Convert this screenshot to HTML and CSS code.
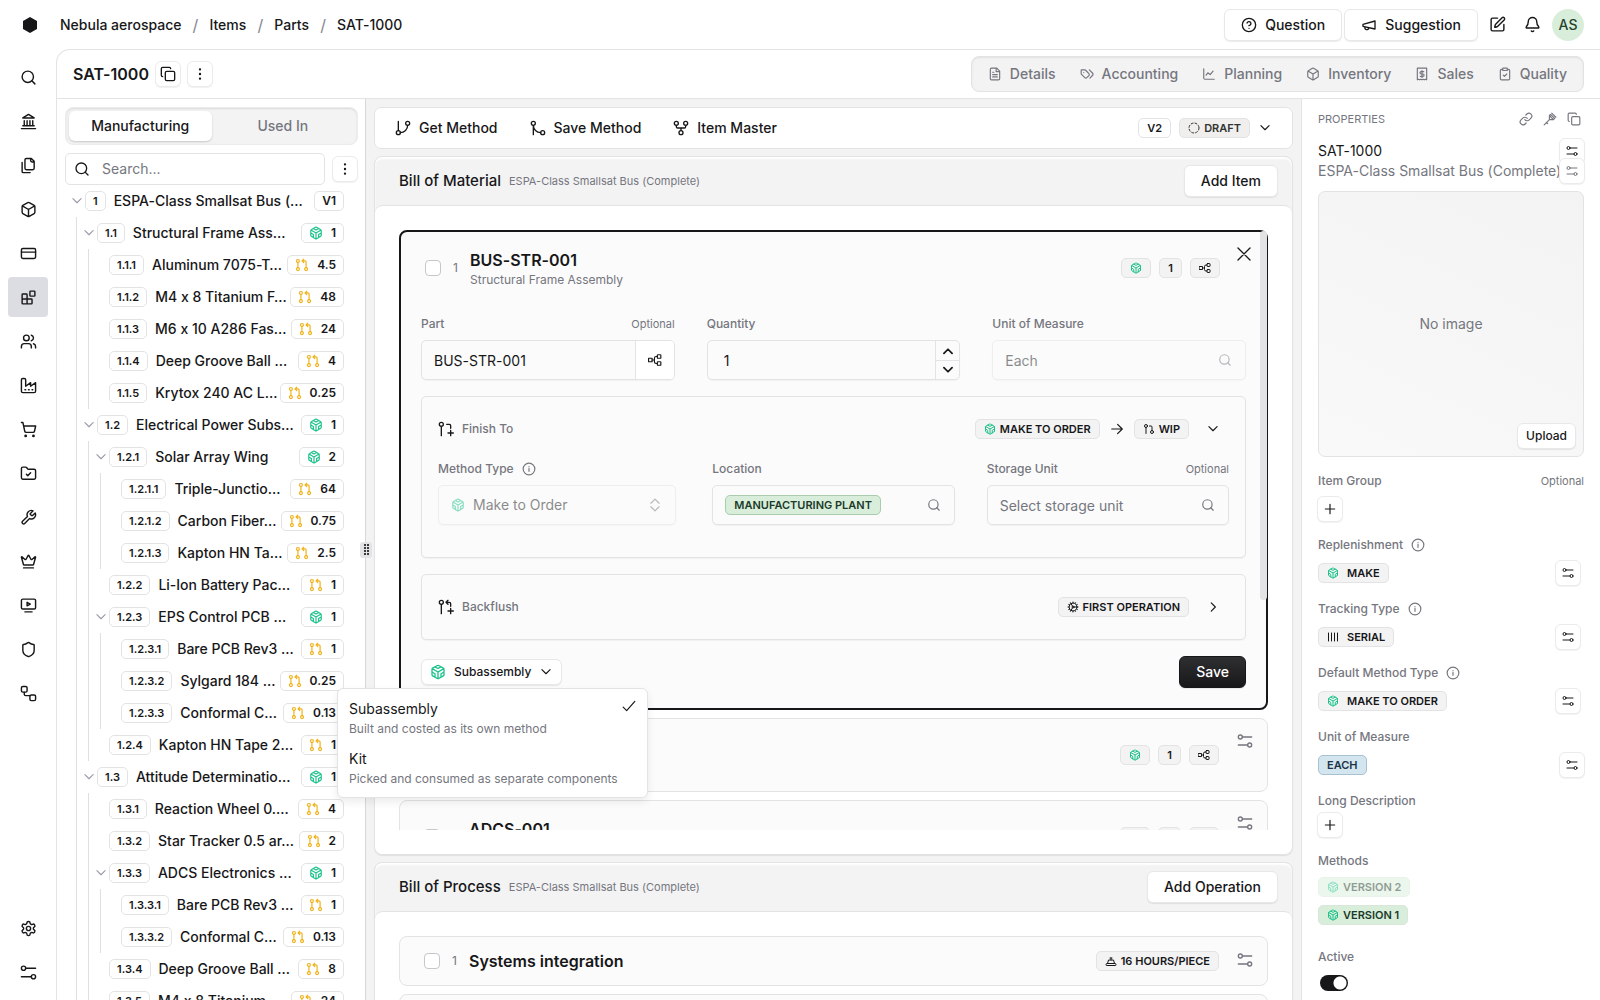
FILE: index.html
```html
<!DOCTYPE html>
<html lang="en">
<head>
    <meta charset="UTF-8">
    <meta name="viewport" content="width=device-width, initial-scale=1.0">
    <title>SAT-1000 | Parts</title>
    <link rel="stylesheet" href="styles.css">
</head>
<body>

    <!-- icon sprite -->
    <svg class="sprite" aria-hidden="true">
        <symbol id="search" viewBox="0 0 24 24"><circle cx="11" cy="11" r="8"/><path d="m21 21-4.3-4.3"/></symbol>
        <symbol id="bank" viewBox="0 0 24 24"><path d="M2 22h20M4 18h16M6 18v-7M10 18v-7M14 18v-7M18 18v-7M12 2l8 5H4z"/></symbol>
        <symbol id="files" viewBox="0 0 24 24"><path d="M20 7h-3a2 2 0 0 1-2-2V2M9 18a2 2 0 0 1-2-2V4a2 2 0 0 1 2-2h7l4 4v10a2 2 0 0 1-2 2ZM3 7.6v12.8A1.6 1.6 0 0 0 4.6 22h9.8"/></symbol>
        <symbol id="box" viewBox="0 0 24 24"><path d="M21 8a2 2 0 0 0-1-1.73l-7-4a2 2 0 0 0-2 0l-7 4A2 2 0 0 0 3 8v8a2 2 0 0 0 1 1.73l7 4a2 2 0 0 0 2 0l7-4A2 2 0 0 0 21 16ZM3.3 7l8.7 5 8.7-5M12 22V12"/></symbol>
        <symbol id="card" viewBox="0 0 24 24"><rect x="2" y="5" width="20" height="14" rx="2"/><path d="M2 10h20"/></symbol>
        <symbol id="blocks" viewBox="0 0 24 24"><rect x="14" y="3" width="7" height="7" rx="1"/><path d="M10 21V8a1 1 0 0 0-1-1H4a1 1 0 0 0-1 1v12a1 1 0 0 0 1 1h12a1 1 0 0 0 1-1v-5a1 1 0 0 0-1-1H3"/></symbol>
        <symbol id="users" viewBox="0 0 24 24"><path d="M16 21v-2a4 4 0 0 0-4-4H6a4 4 0 0 0-4 4v2"/><circle cx="9" cy="7" r="4"/><path d="M22 21v-2a4 4 0 0 0-3-3.87M16 3.13a4 4 0 0 1 0 7.75"/></symbol>
        <symbol id="factory" viewBox="0 0 24 24"><path d="M2 20a2 2 0 0 0 2 2h16a2 2 0 0 0 2-2V8l-7 5V8l-7 5V4a2 2 0 0 0-2-2H4a2 2 0 0 0-2 2ZM17 18h1M12 18h1M7 18h1"/></symbol>
        <symbol id="cart" viewBox="0 0 24 24"><circle cx="8" cy="21" r="1"/><circle cx="19" cy="21" r="1"/><path d="M2.05 2.05h2l2.66 12.42a2 2 0 0 0 2 1.58h9.78a2 2 0 0 0 1.95-1.57l1.65-7.43H5.12"/></symbol>
        <symbol id="folder" viewBox="0 0 24 24"><path d="M20 20a2 2 0 0 0 2-2V8a2 2 0 0 0-2-2h-7.9a2 2 0 0 1-1.69-.9L9.6 3.9A2 2 0 0 0 7.93 3H4a2 2 0 0 0-2 2v13a2 2 0 0 0 2 2ZM9 13l2 2 4-4"/></symbol>
        <symbol id="wrench" viewBox="0 0 24 24"><path d="M14.7 6.3a1 1 0 0 0 0 1.4l1.6 1.6a1 1 0 0 0 1.4 0l3.77-3.77a6 6 0 0 1-7.94 7.94l-6.91 6.91a2.12 2.12 0 0 1-3-3l6.91-6.91a6 6 0 0 1 7.94-7.94z"/></symbol>
        <symbol id="crown" viewBox="0 0 24 24"><path d="M11.56 3.27a.5.5 0 0 1 .88 0l2.95 5.6a1 1 0 0 0 1.52.3l4.27-3.67a.5.5 0 0 1 .8.52l-2.83 10.25a1 1 0 0 1-.96.73H5.81a1 1 0 0 1-.96-.73L2.02 6.02a.5.5 0 0 1 .8-.52l4.27 3.67a1 1 0 0 0 1.52-.3zM5 21h14"/></symbol>
        <symbol id="monitor" viewBox="0 0 24 24"><rect x="2" y="3" width="20" height="14" rx="2"/><path d="M10 7.5v5l4.5-2.5zM7 21h10"/></symbol>
        <symbol id="shield" viewBox="0 0 24 24"><path d="M20 13c0 5-3.5 7.5-7.66 8.95a1 1 0 0 1-.67-.01C7.5 20.5 4 18 4 13V6a1 1 0 0 1 1-1c2 0 4.5-1.2 6.24-2.72a1.17 1.17 0 0 1 1.52 0C14.51 3.81 17 5 19 5a1 1 0 0 1 1 1z"/></symbol>
        <symbol id="flow" viewBox="0 0 24 24"><rect x="2" y="2" width="8" height="8" rx="2"/><rect x="14" y="14" width="8" height="8" rx="2"/><path d="M6 10v3a2 2 0 0 0 2 2h6"/></symbol>
        <symbol id="gear" viewBox="0 0 24 24"><path d="M12.22 2h-.44a2 2 0 0 0-2 2v.18a2 2 0 0 1-1 1.73l-.43.25a2 2 0 0 1-2 0l-.15-.08a2 2 0 0 0-2.73.73l-.22.38a2 2 0 0 0 .73 2.73l.15.1a2 2 0 0 1 1 1.72v.51a2 2 0 0 1-1 1.74l-.15.09a2 2 0 0 0-.73 2.73l.22.38a2 2 0 0 0 2.73.73l.15-.08a2 2 0 0 1 2 0l.43.25a2 2 0 0 1 1 1.73V20a2 2 0 0 0 2 2h.44a2 2 0 0 0 2-2v-.18a2 2 0 0 1 1-1.73l.43-.25a2 2 0 0 1 2 0l.15.08a2 2 0 0 0 2.73-.73l.22-.39a2 2 0 0 0-.73-2.73l-.15-.08a2 2 0 0 1-1-1.74v-.5a2 2 0 0 1 1-1.74l.15-.09a2 2 0 0 0 .73-2.73l-.22-.38a2 2 0 0 0-2.73-.73l-.15.08a2 2 0 0 1-2 0l-.43-.25a2 2 0 0 1-1-1.73V4a2 2 0 0 0-2-2z"/><circle cx="12" cy="12" r="3"/></symbol>
        <symbol id="sliders" viewBox="0 0 24 24"><path d="M22 6H8M2 18h14"/><circle cx="5" cy="6" r="3"/><circle cx="19" cy="18" r="3"/></symbol>
        <symbol id="copy" viewBox="0 0 24 24"><rect x="8" y="8" width="14" height="14" rx="2"/><path d="M4 16a2 2 0 0 1-2-2V4a2 2 0 0 1 2-2h10a2 2 0 0 1 2 2"/></symbol>
        <symbol id="dots" viewBox="0 0 24 24"><path stroke-width="4" d="M12 4v.01M12 12v.01M12 20v.01"/></symbol>
        <symbol id="help" viewBox="0 0 24 24"><circle cx="12" cy="12" r="10"/><path d="M9.09 9a3 3 0 0 1 5.83 1c0 2-3 3-3 3M12 17h.01"/></symbol>
        <symbol id="mega" viewBox="0 0 24 24"><path d="m3 11 18-5v12L3 14zM11.6 16.8a3 3 0 1 1-5.8-1.6"/></symbol>
        <symbol id="edit" viewBox="0 0 24 24"><path d="M12 3H5a2 2 0 0 0-2 2v14a2 2 0 0 0 2 2h14a2 2 0 0 0 2-2v-7M18.4 2.6a1 1 0 0 1 3 3l-9 9a2 2 0 0 1-.85.5l-2.87.84a.5.5 0 0 1-.62-.62l.84-2.87a2 2 0 0 1 .5-.85z"/></symbol>
        <symbol id="bell" viewBox="0 0 24 24"><path d="M10.27 21a2 2 0 0 0 3.46 0M3.26 15.33A1 1 0 0 0 4 17h16a1 1 0 0 0 .74-1.67C19.41 13.96 18 12.5 18 8A6 6 0 0 0 6 8c0 4.5-1.41 5.96-2.74 7.33"/></symbol>
        <symbol id="doc" viewBox="0 0 24 24"><path d="M15 2H6a2 2 0 0 0-2 2v16a2 2 0 0 0 2 2h12a2 2 0 0 0 2-2V7zM14 2v6h6M8 9h2M8 13h8M8 17h8"/></symbol>
        <symbol id="tags" viewBox="0 0 24 24"><path d="m16 5 5.7 5.7a2.4 2.4 0 0 1 0 3.4L17 19M9.6 5.6A2 2 0 0 0 8.2 5H3a1 1 0 0 0-1 1v5.2a2 2 0 0 0 .6 1.4l5.7 5.7a2.4 2.4 0 0 0 3.4 0l3.6-3.6a2.4 2.4 0 0 0 0-3.4zM6.5 9.5h.01"/></symbol>
        <symbol id="chart" viewBox="0 0 24 24"><path d="M3 3v16a2 2 0 0 0 2 2h16M7 14l3-4 4 3 5-6"/></symbol>
        <symbol id="receipt" viewBox="0 0 24 24"><path d="M4 2h16v20l-2-1-2 1-2-1-2 1-2-1-2 1-2-1-2 1zM15 8h-4.500a2 2 0 1 0 0 4h3a2 2 0 1 1 0 4H9M12 6v12"/></symbol>
        <symbol id="clip" viewBox="0 0 24 24"><rect x="8" y="2" width="8" height="4" rx="1"/><path d="M16 4h2a2 2 0 0 1 2 2v14a2 2 0 0 1-2 2H6a2 2 0 0 1-2-2V6a2 2 0 0 1 2-2h2M9 14l2 2 4-4"/></symbol>
        <symbol id="cube" viewBox="0 0 24 24"><path d="M21 16V8a2 2 0 0 0-1-1.730l-7-4a2 2 0 0 0-2 0l-7 4A2 2 0 0 0 3 8v8a2 2 0 0 0 1 1.730l7 4a2 2 0 0 0 2 0l7-4A2 2 0 0 0 21 16zM7.500 4.210 12 6.810l4.500-2.600M7.500 19.790V14.600L3 12M21 12l-4.500 2.600v5.190M3.270 6.960 12 12l8.730-5.040M12 22V12"/></symbol>
        <symbol id="pull" viewBox="0 0 24 24"><circle cx="5" cy="5" r="2.500"/><circle cx="5" cy="19" r="2.500"/><circle cx="19" cy="19" r="2.500"/><path d="M5 8v8M12 5h5a2 2 0 0 1 2 2v9M15 8l-3-3 3-3"/></symbol>
        <symbol id="pr" viewBox="0 0 24 24"><circle cx="18" cy="18" r="3"/><circle cx="6" cy="6" r="3"/><path d="M13 6h3a2 2 0 0 1 2 2v7M6 9v12"/></symbol>
        <symbol id="pr-new" viewBox="0 0 24 24"><circle cx="5" cy="5" r="3"/><path d="M5 8v14M13 5h4a2 2 0 0 1 2 2v4M19 14v8M23 18h-8"/></symbol>
        <symbol id="pr-back" viewBox="0 0 24 24"><circle cx="5" cy="5" r="3"/><path d="M5 8v14M15 8l-3-3 3-3M12 5h5a2 2 0 0 1 2 2v4M19 14v8M23 18h-8"/></symbol>
        <symbol id="branch" viewBox="0 0 24 24"><circle cx="19" cy="5" r="3"/><circle cx="5" cy="19" r="3"/><path d="M5 2v14M19 8A11 11 0 0 1 8 19"/></symbol>
        <symbol id="merge" viewBox="0 0 24 24"><circle cx="19" cy="19" r="3"/><circle cx="5" cy="5" r="3"/><path d="M5 22V8a11 11 0 0 0 11 11"/></symbol>
        <symbol id="fork" viewBox="0 0 24 24"><circle cx="12" cy="19" r="3"/><circle cx="5" cy="5" r="3"/><circle cx="19" cy="5" r="3"/><path d="M19 8v2a2 2 0 0 1-2 2H7a2 2 0 0 1-2-2V8M12 12v4"/></symbol>
        <symbol id="nodes" viewBox="0 0 24 24"><rect x="1" y="9" width="6" height="6"/><rect x="16" y="3" width="6" height="6" rx="1"/><rect x="16" y="15" width="6" height="6" rx="1"/><path d="M7 12h4M16 6h-2a3 3 0 0 0-3 3v6a3 3 0 0 0 3 3h2"/></symbol>
        <symbol id="cog" viewBox="0 0 24 24"><circle cx="12" cy="12" r="8"/><circle cx="12" cy="12" r="2"/><path d="M12 2v2M12 22v-2M17 20.660l-1-1.730M11 10.270 7 3.340M20.660 17l-1.730-1M3.340 7l1.730 1M14 12h8M2 12h2M20.660 7l-1.730 1M3.340 17l1.730-1M17 3.340l-1 1.730M11 13.730l-4 6.930"/></symbol>
        <symbol id="dashed" viewBox="0 0 24 24"><circle cx="12" cy="12" r="10" stroke-dasharray="4 4"/></symbol>
        <symbol id="setup" viewBox="0 0 24 24"><path d="M3 21a1 1 0 0 1-1-1v-1a2 2 0 0 1 2-2h16a2 2 0 0 1 2 2v1a1 1 0 0 1-1 1ZM5 17l2-7h10l2 7M10 6h4M12 6v4"/></symbol>
        <symbol id="down" viewBox="0 0 24 24"><path d="m5 8 7 7 7-7"/></symbol>
        <symbol id="up" viewBox="0 0 24 24"><path d="m5 16 7-7 7 7"/></symbol>
        <symbol id="right" viewBox="0 0 24 24"><path d="m9 5 7 7-7 7"/></symbol>
        <symbol id="updown" viewBox="0 0 24 24"><path d="m5 9 7-7 7 7M5 15l7 7 7-7"/></symbol>
        <symbol id="arrow" viewBox="0 0 24 24"><path d="M3 12h18M13 4l8 8-8 8"/></symbol>
        <symbol id="close" viewBox="0 0 24 24"><path d="M3 3l18 18M21 3 3 21"/></symbol>
        <symbol id="info" viewBox="0 0 24 24"><circle cx="12" cy="12" r="10"/><path d="M12 16v-5M12 8h.01"/></symbol>
        <symbol id="check" viewBox="0 0 24 24"><path d="M22 4 8 20l-6-6"/></symbol>
        <symbol id="plus" viewBox="0 0 24 24"><path d="M4 12h16M12 4v16"/></symbol>
        <symbol id="link" viewBox="0 0 24 24"><path d="M10 13a5 5 0 0 0 7.540.540l3-3a5 5 0 0 0-7.070-7.070l-1.720 1.710M14 11a5 5 0 0 0-7.540-.540l-3 3a5 5 0 0 0 7.070 7.070l1.710-1.710"/></symbol>
        <symbol id="key" viewBox="0 0 24 24"><path d="m2 22 9-9M8 20l-2-2M13 4l7 7M11 6l7 7M15 2l7 7M13 4l-2 2v7h7l2-2"/></symbol>
        <symbol id="bars" viewBox="0 0 24 24"><path d="M3 4v16M9 4v16M15 4v16M21 4v16"/></symbol>
    </svg>

    <header class="topbar">
        <svg class="logo" viewBox="0 0 14 16"><path d="M7 0l7 4v8l-7 4-7-4V4z"/></svg>
        <nav class="crumbs">
            <a href="#">Nebula aerospace</a><span>/</span><a href="#">Items</a><span>/</span><a href="#">Parts</a><span>/</span><a href="#">SAT-1000</a>
        </nav>
        <div class="topbar-actions">
            <button class="btn"><svg class="i16"><use href="#help"/></svg>Question</button>
            <button class="btn"><svg class="i16"><use href="#mega"/></svg>Suggestion</button>
            <button class="ghost" aria-label="Edit"><svg class="i18"><use href="#edit"/></svg></button>
            <button class="ghost" aria-label="Notifications"><svg class="i18"><use href="#bell"/></svg></button>
            <button class="avatar">AS</button>
        </div>
    </header>

    <div class="shell">
        <nav class="rail" id="rail"></nav>

        <div class="panel">
            <div class="panel-header">
                <h1>SAT-1000</h1>
                <button class="btn-icon" aria-label="Copy"><svg class="i16"><use href="#copy"/></svg></button>
                <button class="btn-icon" aria-label="More"><svg class="i14"><use href="#dots"/></svg></button>
                <nav class="section-tabs">
                    <a href="#"><svg class="i14"><use href="#doc"/></svg>Details</a>
                    <a href="#"><svg class="i14"><use href="#tags"/></svg>Accounting</a>
                    <a href="#"><svg class="i14"><use href="#chart"/></svg>Planning</a>
                    <a href="#"><svg class="i14"><use href="#box"/></svg>Inventory</a>
                    <a href="#"><svg class="i14"><use href="#receipt"/></svg>Sales</a>
                    <a href="#"><svg class="i14"><use href="#clip"/></svg>Quality</a>
                </nav>
            </div>

            <div class="columns">
                <!-- explorer -->
                <aside class="explorer">
                    <div class="switch-tabs">
                        <button class="active">Manufacturing</button>
                        <button>Used In</button>
                    </div>
                    <div class="search-row">
                        <label class="search-box">
                            <svg class="i16"><use href="#search"/></svg>
                            <input type="text" placeholder="Search..." aria-label="Search">
                        </label>
                        <button class="btn-icon" aria-label="More"><svg class="i14"><use href="#dots"/></svg></button>
                    </div>
                    <ul class="tree" id="method-tree"></ul>
                    <div class="grip"><i></i><i></i><i></i><i></i><i></i><i></i><i></i><i></i></div>
                </aside>

                <!-- method editor -->
                <main class="content">
                    <div class="toolbar">
                        <button class="tool"><svg class="i16"><use href="#branch"/></svg>Get Method</button>
                        <button class="tool"><svg class="i16"><use href="#merge"/></svg>Save Method</button>
                        <button class="tool"><svg class="i16"><use href="#fork"/></svg>Item Master</button>
                        <div class="toolbar-end">
                            <span class="badge outline">V2</span>
                            <span class="badge draft"><svg class="i12"><use href="#dashed"/></svg>DRAFT</span>
                            <button class="ghost" aria-label="Versions"><svg class="i14"><use href="#down"/></svg></button>
                        </div>
                    </div>

                    <section class="card">
                        <div class="card-header">
                            <h2>Bill of Material</h2>
                            <small>ESPA-Class Smallsat Bus (Complete)</small>
                            <button class="btn">Add Item</button>
                        </div>
                        <div class="card-body">
                            <div class="list">
                                <article class="item open">
                                    <div class="item-header">
                                        <input type="checkbox" aria-label="Select BUS-STR-001">
                                        <span class="num">1</span>
                                        <div class="item-title">
                                            <h3>BUS-STR-001</h3>
                                            <p>Structural Frame Assembly</p>
                                        </div>
                                        <div class="badges">
                                            <span class="badge"><svg class="i12 green"><use href="#cube"/></svg></span>
                                            <span class="badge">1</span>
                                            <span class="badge"><svg class="i12"><use href="#nodes"/></svg></span>
                                        </div>
                                        <button class="corner" aria-label="Close"><svg class="i16"><use href="#close"/></svg></button>
                                    </div>

                                    <div class="fields">
                                        <div class="field">
                                            <div class="label-row"><label for="part">Part</label><small>Optional</small></div>
                                            <div class="control">
                                                <input type="text" id="part" value="BUS-STR-001">
                                                <button class="addon" aria-label="Open part"><svg class="i14"><use href="#nodes"/></svg></button>
                                            </div>
                                        </div>
                                        <div class="field">
                                            <div class="label-row"><label for="qty">Quantity</label></div>
                                            <div class="control">
                                                <input class="qty" type="text" id="qty" value="1">
                                                <div class="stepper">
                                                    <button aria-label="Increase"><svg class="i14"><use href="#up"/></svg></button>
                                                    <button aria-label="Decrease"><svg class="i14"><use href="#down"/></svg></button>
                                                </div>
                                            </div>
                                        </div>
                                        <div class="field">
                                            <div class="label-row"><label for="uom">Unit of Measure</label></div>
                                            <div class="control disabled">
                                                <input type="text" id="uom" value="Each" disabled>
                                                <svg class="i14 trail"><use href="#search"/></svg>
                                            </div>
                                        </div>
                                    </div>

                                    <div class="box">
                                        <div class="box-header">
                                            <svg class="i16"><use href="#pr-new"/></svg>
                                            <span>Finish To</span>
                                            <div class="badges">
                                                <span class="badge"><svg class="i12 green"><use href="#cube"/></svg>MAKE TO ORDER</span>
                                                <svg class="i14"><use href="#arrow"/></svg>
                                                <span class="badge"><svg class="i12"><use href="#pr"/></svg>WIP</span>
                                            </div>
                                            <button class="ghost" aria-label="Collapse"><svg class="i14"><use href="#down"/></svg></button>
                                        </div>
                                        <div class="fields">
                                            <div class="field narrow">
                                                <div class="label-row"><label for="method">Method Type</label><svg class="i14"><use href="#info"/></svg></div>
                                                <div class="control disabled">
                                                    <svg class="i14 lead green"><use href="#cube"/></svg>
                                                    <select id="method" disabled><option>Make to Order</option></select>
                                                    <svg class="i14 trail"><use href="#updown"/></svg>
                                                </div>
                                            </div>
                                            <div class="field">
                                                <div class="label-row"><label for="location">Location</label></div>
                                                <button class="control combo" id="location">
                                                    <span class="badge green-badge">MANUFACTURING PLANT</span>
                                                    <svg class="i14 trail"><use href="#search"/></svg>
                                                </button>
                                            </div>
                                            <div class="field">
                                                <div class="label-row"><label for="storage">Storage Unit</label><small>Optional</small></div>
                                                <div class="control">
                                                    <input type="text" id="storage" placeholder="Select storage unit">
                                                    <svg class="i14 trail"><use href="#search"/></svg>
                                                </div>
                                            </div>
                                        </div>
                                    </div>

                                    <div class="box">
                                        <div class="box-header">
                                            <svg class="i16"><use href="#pr-back"/></svg>
                                            <span>Backflush</span>
                                            <div class="badges">
                                                <span class="badge"><svg class="i12"><use href="#cog"/></svg>FIRST OPERATION</span>
                                            </div>
                                            <button class="ghost" aria-label="Expand"><svg class="i14"><use href="#right"/></svg></button>
                                        </div>
                                    </div>

                                    <div class="item-footer">
                                        <button class="btn small"><svg class="i16 green"><use href="#cube"/></svg>Subassembly<svg class="i14"><use href="#down"/></svg></button>
                                        <button class="btn primary">Save</button>
                                    </div>
                                </article>

                                <article class="item">
                                    <div class="item-header">
                                        <input type="checkbox" aria-label="Select item">
                                        <span class="num"></span>
                                        <div class="badges">
                                            <span class="badge"><svg class="i12 green"><use href="#cube"/></svg></span>
                                            <span class="badge">1</span>
                                            <span class="badge"><svg class="i12"><use href="#nodes"/></svg></span>
                                        </div>
                                        <button class="corner" aria-label="Options"><svg class="i16"><use href="#sliders"/></svg></button>
                                    </div>
                                </article>

                                <article class="item">
                                    <div class="item-header">
                                        <input type="checkbox" aria-label="Select ADCS-001">
                                        <span class="num"></span>
                                        <div class="item-title"><h3>ADCS-001</h3><p></p></div>
                                        <div class="badges">
                                            <span class="badge"><svg class="i12 green"><use href="#cube"/></svg></span>
                                            <span class="badge"><i class="blank"></i></span>
                                            <span class="badge"><svg class="i12"><use href="#nodes"/></svg></span>
                                        </div>
                                        <button class="corner" aria-label="Options"><svg class="i16"><use href="#sliders"/></svg></button>
                                    </div>
                                </article>
                                <div class="scroll-thumb"></div>
                            </div>
                        </div>
                    </section>

                    <section class="card">
                        <div class="card-header">
                            <h2>Bill of Process</h2>
                            <small>ESPA-Class Smallsat Bus (Complete)</small>
                            <button class="btn">Add Operation</button>
                        </div>
                        <div class="card-body">
                            <div class="list">
                                <article class="item slim">
                                    <div class="item-header">
                                        <input type="checkbox" aria-label="Select Systems integration">
                                        <span class="num">1</span>
                                        <div class="item-title"><h3>Systems integration</h3></div>
                                        <div class="badges">
                                            <span class="badge"><svg class="i12"><use href="#setup"/></svg>16 HOURS/PIECE</span>
                                        </div>
                                        <button class="corner" aria-label="Options"><svg class="i16"><use href="#sliders"/></svg></button>
                                    </div>
                                </article>
                                <article class="item slim"></article>
                            </div>
                        </div>
                    </section>
                </main>

                <!-- properties -->
                <aside class="props">
                    <div class="props-header">
                        <span>PROPERTIES</span>
                        <button class="ghost" aria-label="Copy link"><svg class="i14"><use href="#link"/></svg></button>
                        <button class="ghost" aria-label="Copy id"><svg class="i14"><use href="#key"/></svg></button>
                        <button class="ghost" aria-label="Copy number"><svg class="i14"><use href="#copy"/></svg></button>
                    </div>
                    <div class="names">
                        <div class="name-row"><span>SAT-1000</span><button class="btn-icon" aria-label="Edit number"><svg class="i12"><use href="#sliders"/></svg></button></div>
                        <div class="name-row muted"><span>ESPA-Class Smallsat Bus (Complete)</span><button class="btn-icon" aria-label="Edit name"><svg class="i12"><use href="#sliders"/></svg></button></div>
                    </div>
                    <div class="no-image">
                        <span>No image</span>
                        <button class="btn small">Upload</button>
                    </div>
                    <div class="prop first">
                        <div class="label-row"><span>Item Group</span><small>Optional</small></div>
                        <button class="btn-icon" aria-label="Add item group"><svg class="i14"><use href="#plus"/></svg></button>
                    </div>
                    <div class="prop">
                        <div class="label-row"><span>Replenishment</span><svg class="i14"><use href="#info"/></svg></div>
                        <div class="prop-value inset"><span class="badge wide"><svg class="i12 green"><use href="#cube"/></svg>MAKE</span><button class="btn-icon" aria-label="Edit"><svg class="i12"><use href="#sliders"/></svg></button></div>
                    </div>
                    <div class="prop">
                        <div class="label-row"><span>Tracking Type</span><svg class="i14"><use href="#info"/></svg></div>
                        <div class="prop-value inset"><span class="badge wide"><svg class="i12"><use href="#bars"/></svg>SERIAL</span><button class="btn-icon" aria-label="Edit"><svg class="i12"><use href="#sliders"/></svg></button></div>
                    </div>
                    <div class="prop">
                        <div class="label-row"><span>Default Method Type</span><svg class="i14"><use href="#info"/></svg></div>
                        <div class="prop-value inset"><span class="badge wide"><svg class="i12 green"><use href="#cube"/></svg>MAKE TO ORDER</span><button class="btn-icon" aria-label="Edit"><svg class="i12"><use href="#sliders"/></svg></button></div>
                    </div>
                    <div class="prop">
                        <div class="label-row"><span>Unit of Measure</span></div>
                        <div class="prop-value"><span class="badge blue-badge">EACH</span><button class="btn-icon" aria-label="Edit"><svg class="i12"><use href="#sliders"/></svg></button></div>
                    </div>
                    <div class="prop tight">
                        <div class="label-row"><span>Long Description</span></div>
                        <button class="btn-icon" aria-label="Add description"><svg class="i14"><use href="#plus"/></svg></button>
                    </div>
                    <div class="prop versions">
                        <div class="label-row"><span>Methods</span></div>
                        <a class="badge version faded" href="#"><svg class="i12 green"><use href="#cube"/></svg>VERSION 2</a>
                        <a class="badge version" href="#"><svg class="i12 green"><use href="#cube"/></svg>VERSION 1</a>
                    </div>
                    <div class="prop last">
                        <div class="label-row"><label for="active">Active</label></div>
                        <input class="toggle" type="checkbox" id="active" checked>
                    </div>
                </aside>
            </div>
        </div>
    </div>

    <!-- dropdown opened from the Subassembly button -->
    <div class="menu" role="menu">
        <button role="menuitem"><span>Subassembly</span><small>Built and costed as its own method</small><svg class="i14"><use href="#check"/></svg></button>
        <button role="menuitem"><span>Kit</span><small>Picked and consumed as separate components</small></button>
    </div>

    <script>
        // --- left rail ---
        const railIcons = ['search', 'bank', 'files', 'box', 'card', 'blocks', 'users', 'factory', 'cart',
            'folder', 'wrench', 'crown', 'monitor', 'shield', 'flow', 'gear', 'sliders'];
        const rail = document.getElementById('rail');
        railIcons.forEach(name => {
            const active = name === 'blocks' ? ' class="active"' : '';
            const push = name === 'gear' ? ' class="push"' : '';
            rail.innerHTML += `<a href="#" aria-label="${name}"${active}${push}><svg class="i18"><use href="#${name}"/></svg></a>`;
        });

        // --- method tree: [id, name, quantity, type] ---
        const rows = [
            ['1', 'ESPA-Class Smallsat Bus (…', 'V1', 'root'],
            ['1.1', 'Structural Frame Ass…', '1', 'make'],
            ['1.1.1', 'Aluminum 7075-T…', '4.5', 'pull'],
            ['1.1.2', 'M4 x 8 Titanium F…', '48', 'pull'],
            ['1.1.3', 'M6 x 10 A286 Fas…', '24', 'pull'],
            ['1.1.4', 'Deep Groove Ball …', '4', 'pull'],
            ['1.1.5', 'Krytox 240 AC L…', '0.25', 'pull'],
            ['1.2', 'Electrical Power Subs…', '1', 'make'],
            ['1.2.1', 'Solar Array Wing', '2', 'make'],
            ['1.2.1.1', 'Triple-Junctio…', '64', 'pull'],
            ['1.2.1.2', 'Carbon Fiber…', '0.75', 'pull'],
            ['1.2.1.3', 'Kapton HN Ta…', '2.5', 'pull'],
            ['1.2.2', 'Li-Ion Battery Pac…', '1', 'pull'],
            ['1.2.3', 'EPS Control PCB …', '1', 'make'],
            ['1.2.3.1', 'Bare PCB Rev3 …', '1', 'pull'],
            ['1.2.3.2', 'Sylgard 184 …', '0.25', 'pull'],
            ['1.2.3.3', 'Conformal C…', '0.13', 'pull'],
            ['1.2.4', 'Kapton HN Tape 2…', '1', 'pull'],
            ['1.3', 'Attitude Determinatio…', '1', 'make'],
            ['1.3.1', 'Reaction Wheel 0.…', '4', 'pull'],
            ['1.3.2', 'Star Tracker 0.5 ar…', '2', 'pull'],
            ['1.3.3', 'ADCS Electronics …', '1', 'make'],
            ['1.3.3.1', 'Bare PCB Rev3 …', '1', 'pull'],
            ['1.3.3.2', 'Conformal C…', '0.13', 'pull'],
            ['1.3.4', 'Deep Groove Ball …', '8', 'pull'],
            ['1.3.5', 'M4 x 8 Titanium…', '24', 'pull']
        ];
        document.getElementById('method-tree').innerHTML = rows.map(([id, name, qty, type]) => {
            const depth = id.split('.').length - 1;
            const lines = '<i class="line"></i>'.repeat(depth);
            const chevron = type === 'pull' ? '' : '<svg class="i14"><use href="#down"/></svg>';
            let icon = '';
            if (type === 'make') icon = '<svg class="i14 green"><use href="#cube"/></svg>';
            if (type === 'pull') icon = '<svg class="i14 orange"><use href="#pull"/></svg>';
            return `<li>${lines}<span class="chevron">${chevron}</span><span class="badge outline">${id}</span>` +
                `<span class="name">${name}</span><span class="badge outline qty-badge">${icon}${qty}</span></li>`;
        }).join('');
    </script>

</body>
</html>
```

FILE: styles.css
```css
* { box-sizing: border-box; }

body {
    margin: 0;
    height: 100vh;
    display: flex;
    flex-direction: column;
    overflow: hidden;
    background: #fff;
    color: #171719;
    font-family: Inter, "Liberation Sans", sans-serif;
    font-feature-settings: "calt" 0; /* keep "4 x 8" as typed */
    font-size: 14px;
    font-weight: 500;
    line-height: 20px;
}

h1, h2, h3, p, ul { margin: 0; padding: 0; }
a { color: inherit; text-decoration: none; }
small { font-size: 12px; line-height: 16px; font-weight: 400; color: #75767e; }
button, input, select { font: inherit; color: inherit; }
button {
    display: flex;
    align-items: center;
    justify-content: center;
    padding: 0;
    border: 0;
    background: none;
    cursor: pointer;
}

/* icons */
.sprite { position: absolute; width: 0; height: 0; }
svg {
    flex: none;
    fill: none;
    stroke: currentColor;
    stroke-width: 2;
    stroke-linecap: round;
    stroke-linejoin: round;
}
.i12 { width: 12px; height: 12px; }
.i14 { width: 14px; height: 14px; }
.i16 { width: 16px; height: 16px; }
.i18 { width: 17px; height: 17px; }
.green { color: #1cc28a; }
.orange { color: #f0b013; }

/* buttons */
.btn {
    height: 32px;
    padding: 0 16px;
    gap: 8px;
    border: 1px solid #e8e8ea;
    border-radius: 6px;
    background: #fff;
    box-shadow: 0 1px 1px rgba(0, 0, 0, 0.08);
}
.btn.small { height: 26px; padding: 0 8px; font-size: 12px; }
.btn.primary { border-color: #171719; background: linear-gradient(#2e2f31, #18181b); color: #fff; }
.btn-icon {
    width: 26px;
    height: 26px;
    flex: none;
    border: 1px solid #ebebed;
    border-radius: 6px;
    background: #fff;
    box-shadow: 0 1px 1px rgba(0, 0, 0, 0.06);
}

/* badges */
.badge {
    display: inline-flex;
    align-items: center;
    flex: none;
    gap: 4px;
    height: 20px;
    padding: 0 8px;
    border: 1px solid #e3e3e5;
    border-radius: 5px;
    background: #f3f3f4;
    font-size: 11px;
    font-weight: 600;
    white-space: nowrap;
}
.badge.outline { background: #fff; }
.badge.draft { background: #f0efee; color: #333; }
.badge.wide { gap: 8px; }
.green-badge { background: #d9eeda; border-color: #a9ccae; color: #1b3a2a; }
.blue-badge { background: #d3e5ef; border-color: #a8c2d1; color: #1c3347; }
.badge.version { background: #d9eeda; border-color: #d9e6da; color: #1b3a2a; }
.badge .blank { width: 5px; }
.faded { opacity: 0.5; }
.badges { display: flex; align-items: center; gap: 8px; margin-left: auto; }

/* top bar */
.topbar { display: flex; align-items: center; height: 49px; padding: 0 16px 0 23px; }
.logo { width: 14px; height: 16px; fill: #171719; stroke: none; }
.crumbs { display: flex; margin-left: 23px; }
.crumbs span { width: 28px; text-align: center; color: #85868e; font-size: 16px; font-weight: 400; }
.topbar-actions { display: flex; align-items: center; margin-left: auto; }
.topbar-actions .btn { margin-right: 2px; }
.topbar-actions .ghost { width: 35px; height: 32px; }
.avatar {
    width: 32px;
    height: 32px;
    margin-left: 2px;
    border-radius: 50%;
    background: #d9eeda;
    color: #25432f;
}

.shell { flex: 1; display: flex; min-height: 0; }

/* left rail */
.rail { width: 56px; flex: none; display: flex; flex-direction: column; gap: 4px; padding: 8px; }
.rail a {
    width: 40px;
    height: 40px;
    display: flex;
    align-items: center;
    justify-content: center;
    border-radius: 4px;
}
.rail .active { background: #dcdde2; }
.rail .push { margin-top: auto; }

.panel {
    flex: 1;
    min-width: 0;
    display: flex;
    flex-direction: column;
    border: solid #e3e3e5;
    border-width: 1px 0 0 1px;
    border-top-left-radius: 14px;
}
.panel-header {
    display: flex;
    align-items: center;
    gap: 6px;
    height: 49px;
    flex: none;
    padding: 0 16px;
    border-bottom: 1px solid #e3e3e5;
}
h1 { font-size: 16px; font-weight: 600; line-height: 24px; }
.section-tabs {
    display: flex;
    align-items: center;
    gap: 24px;
    height: 36px;
    margin-left: auto;
    padding: 0 16px;
    border: 1px solid #e3e3e5;
    border-radius: 8px;
    background: #f3f3f4;
    box-shadow: inset 0 1px 2px rgba(0, 0, 0, 0.08);
    color: #75767e;
}
.section-tabs a { display: flex; align-items: center; gap: 8px; }

.columns { flex: 1; display: flex; min-height: 0; }

/* explorer */
.explorer {
    position: relative;
    width: 309px;
    flex: none;
    padding: 8px 7px 0 8px;
    border-right: 1px solid #d8d8db;
}
.switch-tabs {
    display: flex;
    padding: 3px;
    height: 38px;
    border: 1px solid #ececee;
    border-radius: 8px;
    background: #f3f3f4;
    box-shadow: inset 0 1px 2px rgba(0, 0, 0, 0.1);
}
.switch-tabs button { flex: 1; border-radius: 6px; color: #75767e; }
.switch-tabs .active { background: #fff; color: #171719; box-shadow: 0 1px 2px rgba(0, 0, 0, 0.18); }
.search-row { display: flex; align-items: center; gap: 7px; margin-top: 8px; }
.search-box {
    flex: 1;
    display: flex;
    align-items: center;
    gap: 12px;
    height: 32px;
    padding: 0 8px;
    border: 1px solid #e3e3e5;
    border-radius: 5px;
}
.search-box input { width: 100%; padding: 0; border: 0; outline: 0; background: none; font-weight: 400; }
::placeholder { color: #75767e; opacity: 1; }

.tree { list-style: none; padding-right: 14px; }
.tree li { display: flex; align-items: center; height: 32px; }
.tree .badge { padding: 0 7px; }
.line { width: 12px; height: 32px; flex: none; border-right: 1px solid #e0e0e3; }
.chevron { width: 20px; flex: none; display: flex; padding-left: 5px; color: #9a9ca8; }
.name { flex: 1; min-width: 0; padding-left: 8px; overflow: hidden; white-space: nowrap; }
.qty-badge { gap: 8px; font-size: 12px; }

.grip {
    position: absolute;
    top: 50%;
    right: -7px;
    width: 12px;
    height: 16px;
    display: grid;
    grid-template-columns: 2px 2px;
    gap: 1px;
    place-content: center;
    border-radius: 3px;
    background: #e3e3e5;
    transform: translateY(-50%);
}
.grip i { width: 2px; height: 2px; background: #3a3a3d; }

/* main content */
.content {
    flex: 1;
    min-width: 0;
    display: flex;
    flex-direction: column;
    gap: 7px;
    padding: 8px;
    overflow: hidden;
    background: #f3f3f4;
}
.toolbar {
    display: flex;
    align-items: center;
    gap: 32px;
    height: 42px;
    flex: none;
    padding: 0 20px;
    border: 1px solid #e3e3e5;
    border-radius: 7px;
    background: #fff;
}
.tool { gap: 8px; }
.toolbar-end { display: flex; align-items: center; gap: 8px; margin-left: auto; }

.card {
    flex: none;
    border: 1px solid #e3e3e5;
    border-radius: 8px;
    box-shadow: inset 0 2px 2px #fff, 0 1px 1px rgba(0, 0, 0, 0.08);
}
.card-header { display: flex; align-items: center; gap: 8px; height: 48px; padding: 0 14px 0 24px; }
.card-header .btn { margin-left: auto; }
.card-header small { font-size: 11px; }
h2 { font-size: 15px; font-weight: 500; line-height: 24px; }
.card-body { padding: 24px; border-top: 1px solid #e3e3e5; border-radius: 8px; background: #fff; }
.list { position: relative; display: flex; flex-direction: column; gap: 8px; max-height: 600px; overflow: hidden; }
.scroll-thumb {
    position: absolute;
    top: 1px;
    right: 1px;
    width: 7px;
    height: 369px;
    border-radius: 4px;
    background: #e3e3e5;
}

.item { flex: none; padding: 16px 24px; border: 1px solid #e3e3e5; border-radius: 8px; background: #fbfbfb; }
.item.open {
    display: flex;
    flex-direction: column;
    gap: 16px;
    padding: 16px 20px 20px;
    border: 2px solid #171719;
}
.item.slim { min-height: 50px; padding: 12px 24px; }
.item-header { display: flex; align-items: center; min-height: 40px; }
.open .item-header { margin-bottom: 12px; padding-left: 4px; }
.slim .item-header { min-height: 24px; }
.item-header input {
    appearance: none;
    width: 16px;
    height: 16px;
    flex: none;
    margin: 0;
    border: 1px solid #c6c6cc;
    border-radius: 4px;
    background: #fff;
}
.num { width: 29px; text-align: center; color: #75767e; font-size: 12px; font-weight: 400; }
h3 { font-size: 16px; font-weight: 600; line-height: 24px; }
.item-title p { min-height: 16px; font-size: 12px; line-height: 16px; font-weight: 400; color: #75767e; }
.corner { margin: -2px -10px 0 18px; color: #75767e; }
.item:not(.slim) .corner { align-self: flex-start; }
.open .corner { margin: -2px -6px 0 16px; color: #171719; }

.fields { display: grid; grid-template-columns: repeat(3, minmax(0, 1fr)); gap: 32px; }
.label-row { display: flex; align-items: center; gap: 8px; height: 16px; color: #75767e; font-size: 12px; line-height: 16px; }
.label-row small { margin-left: auto; font-size: 11px; }
.field { display: flex; flex-direction: column; gap: 8px; }
.narrow { padding-right: 4px; }
.control {
    display: flex;
    align-items: center;
    width: 100%;
    height: 40px;
    border: 1px solid #e3e3e5;
    border-radius: 5px;
    box-shadow: 0 1px 1px rgba(0, 0, 0, 0.04);
}
.control input, .control select {
    flex: 1;
    min-width: 0;
    height: 38px;
    padding: 0 12px;
    border: 0;
    outline: 0;
    appearance: none;
    background: none;
    font-weight: 400;
    opacity: 1;
}
.control .qty { padding-left: 16px; }
.control.disabled { opacity: 0.5; }
.lead { margin-left: 12px; }
.control .lead + select { padding-left: 8px; }
.trail { margin-right: 13px; color: #75767e; }
.combo { justify-content: space-between; padding-left: 12px; }
.addon { width: 39px; height: 38px; border-left: 1px solid #e3e3e5; border-radius: 0 4px 4px 0; background: #fff; }
.stepper { width: 24px; border-left: 1px solid #e3e3e5; }
.stepper button { width: 100%; height: 19px; }
.stepper button + button { border-top: 1px solid #e3e3e5; }
.stepper svg { stroke-width: 3; }

.box {
    padding: 16px;
    border: 1px solid #e3e3e5;
    border-radius: 5px;
    box-shadow: 0 1px 1px rgba(0, 0, 0, 0.04);
}
.box .fields { margin: 16px 0; }
.box-header { display: flex; align-items: center; gap: 8px; height: 32px; }
.box-header > span { color: #75767e; font-size: 12px; }
.box-header .badges { gap: 10px; }
.box-header .ghost { width: 32px; height: 32px; }
.item-footer { display: flex; align-items: center; justify-content: space-between; }

/* properties */
.props { width: 299px; flex: none; padding: 12px 16px; border-left: 1px solid #e3e3e5; overflow: hidden; }
.props-header {
    display: flex;
    gap: 10px;
    height: 16px;
    padding-right: 3px;
    color: #75767e;
    font-size: 11px;
    font-weight: 400;
    line-height: 16px;
}
.props-header span { margin-right: auto; }
.names { margin-top: 14px; font-weight: 400; }
.name-row { display: flex; align-items: center; justify-content: space-between; height: 20px; margin-right: -1px; white-space: nowrap; }
.name-row span { width: 0; flex: 1; }
.muted { color: #75767e; }
.no-image {
    position: relative;
    aspect-ratio: 1;
    display: flex;
    align-items: center;
    justify-content: center;
    margin-top: 10px;
    border: 1px solid #e3e3e5;
    border-radius: 7px;
    background: linear-gradient(25deg, #f9f9f9, #f3f3f4);
    font-weight: 400;
}
.no-image span { color: #75767e; }
.no-image .btn { position: absolute; right: 7px; bottom: 7px; font-weight: 500; }
.prop { margin-top: 15px; }
.prop.first { margin-top: 16px; margin-bottom: 15px; }
.prop > .btn-icon { margin: 7px 0 0 -1px; }
.prop-value { display: flex; align-items: center; justify-content: space-between; height: 26px; margin: 7px -1px 0 0; }
.prop-value.inset { margin-right: 3px; }
.prop.tight > .btn-icon { margin-top: 3px; }
.versions { display: flex; flex-direction: column; align-items: flex-start; gap: 8px; }
.prop.last { margin-top: 24px; }
.toggle {
    appearance: none;
    display: block;
    width: 28px;
    height: 16px;
    margin: 10px 0 0 2px;
    border-radius: 8px;
    background: radial-gradient(circle at 20px 8px, #fff 6px, #171719 7px);
}

/* dropdown menu */
.menu {
    position: absolute;
    left: 337px;
    top: 688px;
    width: 311px;
    padding: 4px;
    border: 1px solid #e3e3e5;
    border-radius: 6px;
    background: #fff;
    box-shadow: 0 4px 8px rgba(0, 0, 0, 0.08);
}
.menu button {
    position: relative;
    width: 100%;
    flex-direction: column;
    align-items: flex-start;
    gap: 2px;
    padding: 6px 7px;
    font-weight: 400;
}
.menu svg { position: absolute; top: 6px; right: 7px; }
```
